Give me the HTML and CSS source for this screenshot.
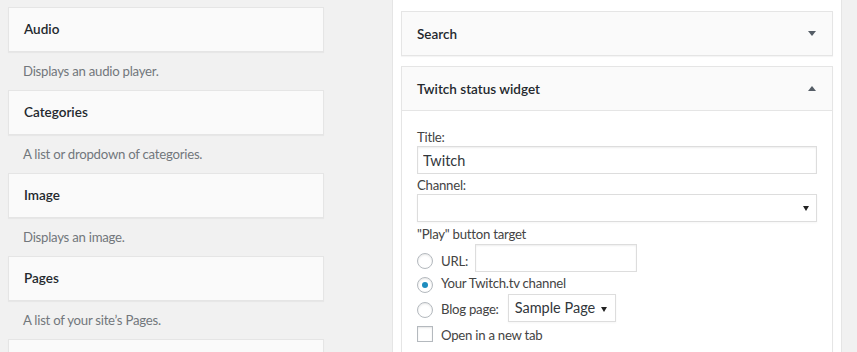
FILE: index.html
```html
<!DOCTYPE html>
<html lang="en">
<head>
<meta charset="utf-8">
<title>Widgets</title>
<link rel="stylesheet" href="styles.css">
</head>
<body>
<div class="page">
  <div class="available">
    <div class="widget">
      <div class="widget-top">Audio</div>
      <div class="widget-desc">Displays an audio player.</div>
    </div>
    <div class="widget">
      <div class="widget-top">Categories</div>
      <div class="widget-desc">A list or dropdown of categories.</div>
    </div>
    <div class="widget">
      <div class="widget-top">Image</div>
      <div class="widget-desc">Displays an image.</div>
    </div>
    <div class="widget">
      <div class="widget-top">Pages</div>
      <div class="widget-desc">A list of your site’s Pages.</div>
    </div>
    <div class="widget">
      <div class="widget-top"></div>
    </div>
  </div>

  <div class="sidebar">
    <div class="sw">
      <div class="sw-top"><span>Search</span><span class="arrow down"></span></div>
    </div>
    <div class="sw open">
      <div class="sw-top"><span>Twitch status widget</span><span class="arrow up"></span></div>
      <div class="sw-body">
        <div class="lbl first">Title:</div>
        <input class="txt full" type="text" value="Twitch">
        <div class="lbl">Channel:</div>
        <div class="sel full"></div>
        <div class="lbl">"Play" button target</div>
        <div class="row r-url">
          <input class="radio" type="radio" name="target">
          <span class="rt">URL:</span>
          <input class="txt url" type="text">
        </div>
        <div class="row r-chan">
          <input class="radio" type="radio" name="target" checked>
          <span class="rt">Your Twitch.tv channel</span>
        </div>
        <div class="row r-blog">
          <input class="radio" type="radio" name="target">
          <span class="rt">Blog page:</span>
          <div class="sel page">Sample Page</div>
        </div>
        <div class="row r-check">
          <input class="check" type="checkbox">
          <span class="rt">Open in a new tab</span>
        </div>
      </div>
    </div>
  </div>
</div>
</body>
</html>
```

FILE: styles.css
```css
html, body {
  margin: 0;
  padding: 0;
}
body {
  background: #f1f1f1;
  font-family: "Lato", "Open Sans", sans-serif;
  font-size: 13.2px;
  letter-spacing: -0.25px;
  color: #444;
  height: 352px;
  overflow: hidden;
}
.page {
  display: flex;
  align-items: flex-start;
}
.available {
  width: 316px;
  padding: 7px 0 0 8px;
  flex-shrink: 0;
}
.widget-top {
  box-sizing: border-box;
  height: 45px;
  border: 1px solid #e5e5e5;
  background: #fafafa;
  box-shadow: 0 1px 1px rgba(0, 0, 0, 0.04);
  padding: 0 15px;
  line-height: 43px;
  font-size: 13.5px;
  letter-spacing: 0;
  font-weight: 600;
  color: #23282d;
}
.widget-desc {
  box-sizing: border-box;
  height: 38px;
  padding: 10px 15px 0;
  line-height: 18px;
  color: #72777c;
}
.sidebar {
  flex-shrink: 0;
  margin-left: 68px;
  width: 432px;
  min-height: 360px;
  padding: 11px 8px 0;
  background: #fff;
  border-left: 1px solid #e5e5e5;
  border-right: 1px solid #e5e5e5;
}
.sw {
  border: 1px solid #e5e5e5;
  background: #fff;
  box-shadow: 0 1px 1px rgba(0, 0, 0, 0.04);
  margin-bottom: 10px;
}
.sw-top {
  height: 43px;
  background: #fafafa;
  display: flex;
  align-items: center;
  justify-content: space-between;
  padding: 0 16px 0 15px;
  font-size: 13.5px;
  letter-spacing: 0;
  font-weight: 600;
  color: #23282d;
}
.open .sw-top {
  border-bottom: 1px solid #e5e5e5;
}
.arrow {
  width: 0;
  height: 0;
  border-left: 4px solid transparent;
  border-right: 4px solid transparent;
}
.arrow.down {
  border-top: 5px solid #555d66;
}
.arrow.up {
  border-bottom: 5px solid #555d66;
}
.sw-body {
  padding: 0 15px 20px;
}
.lbl {
  line-height: 18px;
  margin-top: 3px;
  color: #444;
}
.lbl.first {
  margin-top: 17px;
}
.txt {
  display: block;
  box-sizing: border-box;
  height: 28px;
  margin: 0;
  border: 1px solid #ddd;
  border-radius: 0;
  box-shadow: inset 0 1px 2px rgba(0, 0, 0, 0.07);
  padding: 0 5px;
  font-family: inherit;
  font-size: 14.5px;
  letter-spacing: 0;
  color: #32373c;
  background: #fff;
  outline: none;
}
.full {
  width: 400px;
}
.txt.full {
  margin-bottom: -1px;
}
.sel {
  position: relative;
  box-sizing: border-box;
  height: 28px;
  border: 1px solid #ddd;
  box-shadow: 0 1px 2px rgba(0, 0, 0, 0.04);
  background: #fff;
  font-size: 14.5px;
  letter-spacing: 0;
  line-height: 26px;
  padding: 0 0 0 6px;
  color: #32373c;
  white-space: nowrap;
}
.sel::after {
  content: "";
  position: absolute;
  right: 7px;
  top: 11px;
  border-left: 3px solid transparent;
  border-right: 3px solid transparent;
  border-top: 5px solid #222;
}
.row {
  display: flex;
  align-items: flex-start;
}
.radio, .check {
  -webkit-appearance: none;
  appearance: none;
  box-sizing: border-box;
  width: 16px;
  height: 16px;
  margin: 0 8px 0 0;
  border: 1px solid #b4b9be;
  background: #fff;
  box-shadow: inset 0 1px 2px rgba(0, 0, 0, 0.1);
  flex-shrink: 0;
  position: relative;
}
.radio {
  border-radius: 50%;
}
.check {
  border-radius: 0;
}
.radio:checked::before {
  content: "";
  position: absolute;
  left: 4px;
  top: 4px;
  width: 6px;
  height: 6px;
  border-radius: 50%;
  background: #1e8cbe;
}
.rt {
  line-height: 18px;
  color: #444;
  white-space: nowrap;
}
.r-url {
  height: 28px;
  margin-top: 1px;
}
.r-url .radio { margin-top: 9px; }
.r-url .rt { margin-top: 8px; margin-right: 7px; }
.txt.url { width: 162px; }
.r-chan {
  height: 22px;
}
.r-chan .radio { margin-top: 5px; }
.r-chan .rt { margin-top: 2px; }
.r-blog {
  height: 28px;
}
.r-blog .radio { margin-top: 8px; }
.r-blog .rt { margin-top: 6px; margin-right: 9px; }
.sel.page {
  width: 108px;
}
.sel.page::after {
  top: 12px;
  right: 8px;
}
.r-check {
  height: 24px;
}
.r-check .check { margin-top: 4px; }
.r-check .rt { margin-top: 4px; }
```
